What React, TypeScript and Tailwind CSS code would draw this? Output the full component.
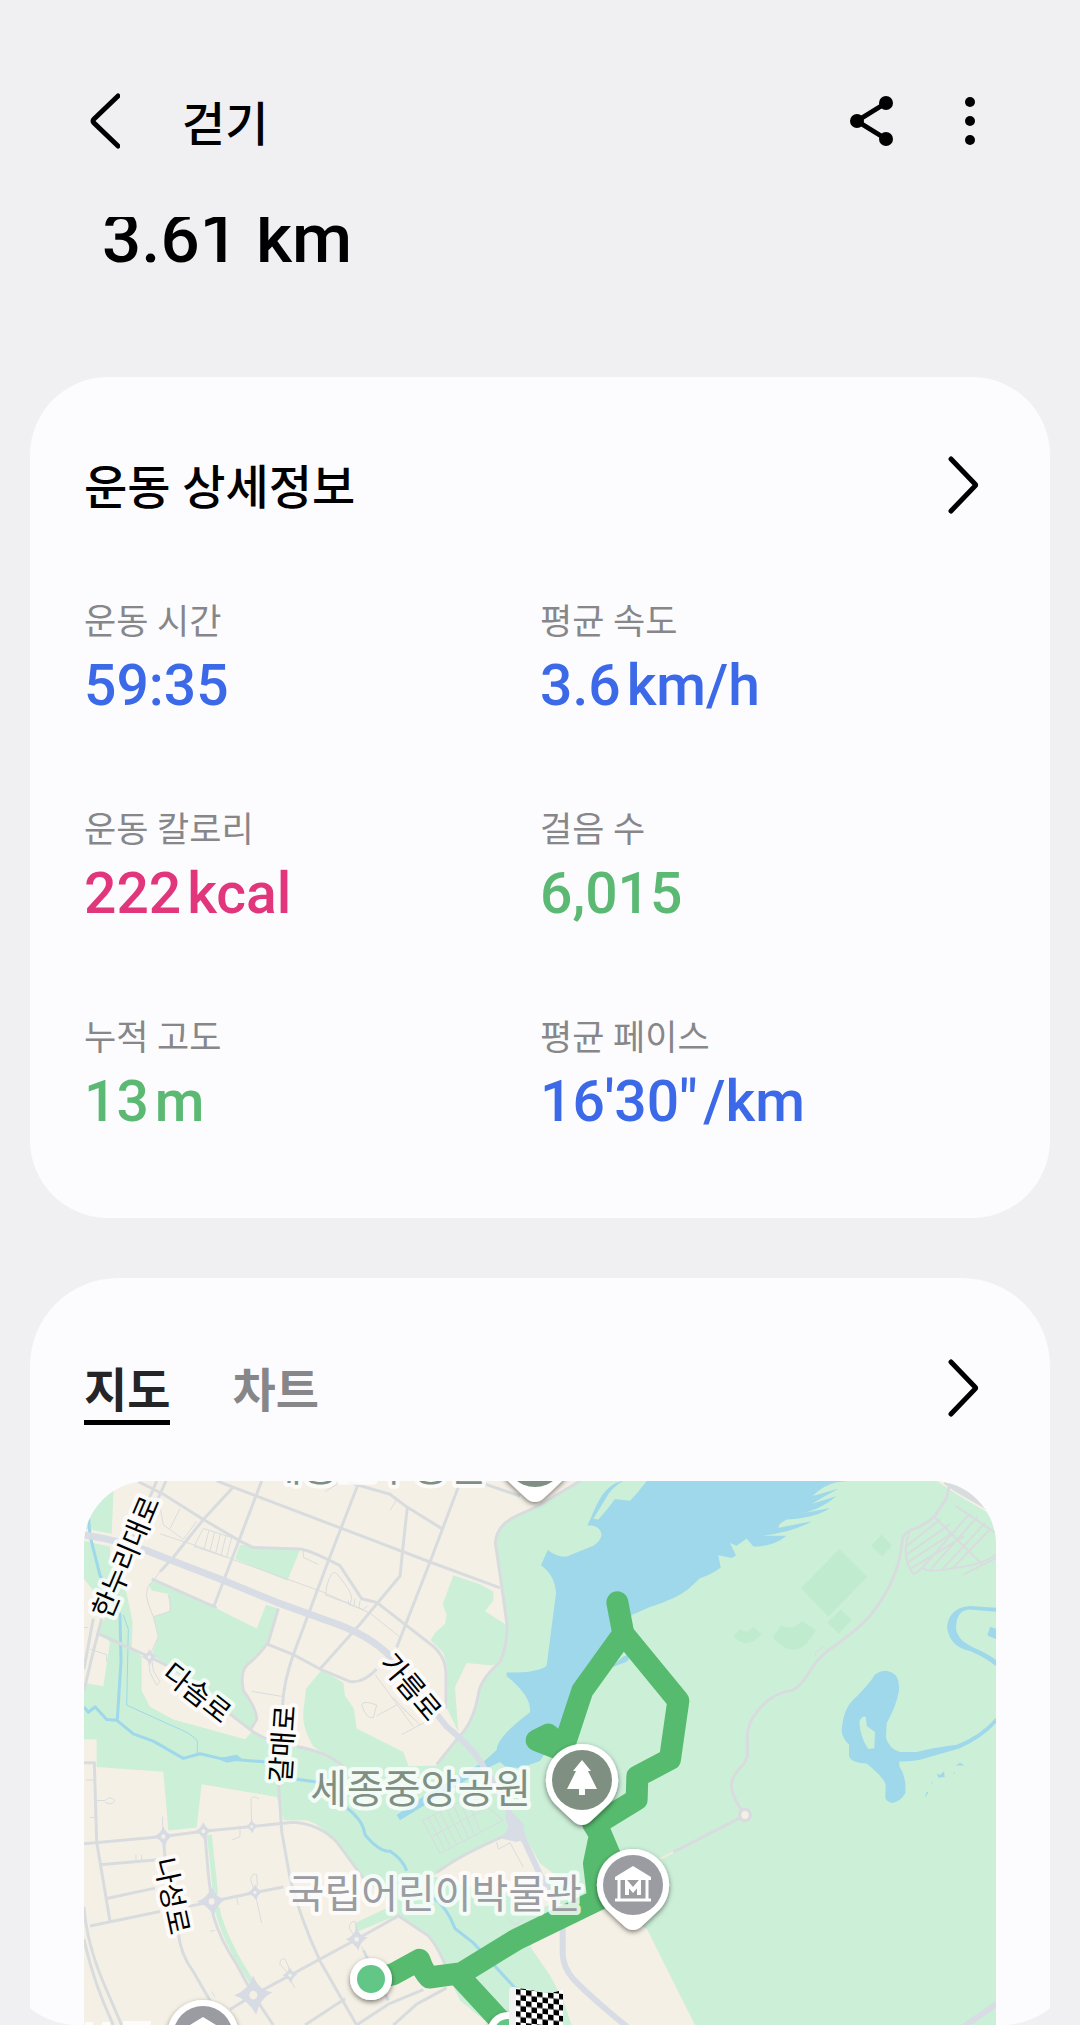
import type { ReactNode } from "react";

const roads = [
  "M235 60L310 95L430 165L540 225L580 243L720 247Q750 250 840 293Q880 350 905 385L950 395L1110 510Q1155 540 1158 590V690",
  "M470 58L590 100L845 190L1110 283L1320 355",
  "M605 58L462 405",
  "M520 75L430 165L340 270L300 310",
  "M893 70L805 280L700 540Q670 620 668 680",
  "M865 62L990 95L1040 130L1145 190",
  "M1195 75L1110 283L1010 520",
  "M1042 130L1028 250L1020 322L905 450L780 580",
  "M275 330L470 410",
  "M110 480L265 545L320 570",
  "M510 705L580 755L620 775",
  "M710 795Q800 810 850 850",
  "M655 412L625 505Q600 540 560 570Q540 590 550 640Q590 690 590 720L570 750",
  "M620 510L700 540L780 580L870 615Q910 620 950 580",
  "M1560 58L1440 125L1370 155Q1310 180 1306 230L1322 330L1340 450Q1345 510 1320 560Q1260 610 1255 650Q1240 730 1195 770L1130 845",
  "M1260 62L1380 100",
  "M72 1065L310 1045L430 1030L575 1017L700 1005Q780 1010 830 1060L910 1160",
  "M655 890L665 1030L690 1160Q720 1270 780 1390L890 1568",
  "M72 840H103L110 1060L150 1280",
  "M310 1045L315 1105M120 1123L310 1108",
  "M140 1217L285 1188M90 1293L300 1253M380 1240L455 1225L585 1200L670 1185",
  "M435 1040L445 1150L455 1225L460 1265Q480 1330 530 1400L580 1485L640 1568",
  "M355 1310Q360 1370 400 1420L450 1500",
  "M510 1525L580 1485L690 1430L890 1330L1015 1265L1105 1320Q1140 1360 1160 1410",
  "M72 1240Q80 1340 130 1450L185 1568M72 1330Q100 1450 160 1568",
  "M735 1568L855 1495M890 1568L985 1510L1090 1470M910 1360L985 1500M1000 1568L1070 1510L1160 1465",
  "M1130 1145Q1200 1095 1340 1040",
  "M290 58L210 235M318 58L230 240M100 440L72 580M125 440L95 550L72 640",
];

const lanes = [
  "M300 310L262 355Q255 375 265 400L280 435L295 490L270 540M280 435L330 420L332 400L325 375",
  "M300 130L310 180L370 220L410 170M360 135L330 190M300 205L400 235L530 280L785 365L930 425L1015 488",
  "M430 190L515 215L500 270L402 240ZM447 195L432 248M464 200L450 254M481 205L467 259M498 210L483 264",
  "M730 250V270L775 290M797 375L800 350Q815 300 830 315L855 345Q875 370 875 385L870 400ZM865 390V400L910 415L922 405M885 385L882 405M900 390L897 412",
  "M990 140L1010 110M795 88L830 68L835 60",
  "M575 642L665 656M945 595L1060 740M905 680Q910 665 950 680L940 715Q920 720 905 680ZM950 710L1010 680M1000 660L1040 700M1025 685L1080 735M1025 762L1100 725M1045 660L1090 710",
  "M265 550L270 590L290 625L300 615L280 585L275 550",
  "M90 525L140 540V560M72 465H85M78 888H105M90 992H108M110 945H135Q150 930 165 945Q155 960 135 950",
  "M575 1015L573 940Q580 930 597 940M540 1025V1045L515 1055M228 1095V1110M245 1095V1110M308 990V1030",
  "M585 1200L572 1165Q575 1145 590 1150L592 1180L585 1200L605 1285M530 1215L535 1235",
  "M690 1430L660 1400Q660 1380 675 1385L685 1405L690 1430L650 1450M685 1435L705 1465M890 1330L868 1300Q868 1280 885 1280L890 1300M905 1350L915 1370",
  "M1088 1000L1240 930L1330 1000L1140 1092ZM1105 992L1155 1083M1122 984L1172 1075M1140 976L1190 1067M1160 968L1208 1059M1180 958L1226 1050M1200 949L1244 1041M1220 940L1262 1032M1115 1045L1270 970",
  "M1310 1060L1315 1080L1350 1062L1390 1130M1340 1270L1365 1290L1390 1275M455 1475L465 1490M450 1308L465 1305M518 1380L530 1375",
];

const trail =
  "M510 195Q485 205 485 235Q475 330 400 420Q370 460 270 525Q230 550 200 600Q170 640 150 640Q90 650 50 700Q22 730 22 770L22 820Q18 840 0 855Q-30 885 -25 910Q-20 940 8 975";

const fieldLines = [
  "M510 195Q480 270 520 315L530 312L548 298Q560 315 640 300Q730 290 768 262",
  "M648 128L768 203M580 155L730 293",
  "M498 240L600 165M500 262L630 178M502 285L650 195M515 300L672 212M548 298L690 148M572 303L712 158M605 305L735 175M635 303L752 190M670 318L768 272",
];

function Road({ d, width = 3, color = "#d9dcdf" }: { d: string; width?: number; color?: string }) {
  return (
    <path
      d={d}
      fill="none"
      stroke={color}
      strokeWidth={width}
      strokeLinejoin="round"
      vectorEffect="non-scaling-stroke"
    />
  );
}

function Junction({ x, y, r }: { x: number; y: number; r: number }) {
  return (
    <g transform={`translate(${x} ${y})`}>
      <path
        d={`M${-r * 1.7} 0Q${-r / 2} ${-r / 3} 0 ${-r * 1.6}Q${r / 2} ${-r / 3} ${r * 1.7} ${-r / 4}Q${r / 2} ${r / 3} ${r / 4} ${r * 1.6}Q${-r / 2} ${r / 3} ${-r * 1.7} 0Z`}
        fill="#d7dbe3"
      />
      <circle r={r * 0.8} fill="#d7dbe3" />
      <circle r={r * 0.35} fill="#f5f0e5" />
    </g>
  );
}

function Pin({ x, y, color, children }: { x: number; y: number; color: string; children?: ReactNode }) {
  return (
    <g transform={`translate(${x} ${y})`}>
      <path
        d="M0-36A36 36 0 0 1 27 24L9 41Q0 49-9 41L-27 24A36 36 0 0 1 0-36Z"
        fill="#fff"
        filter="url(#pin-shadow)"
      />
      <circle r="30" fill={color} />
      {children}
    </g>
  );
}

function MuseumGlyph() {
  return (
    <g>
      <path d="M0-19L18-8V-5H-18V-8Z" fill="#fff" />
      <path d="M-14-5V14M14-5V14M-18 15H18" stroke="#fff" strokeWidth="3" fill="none" />
      <path d="M-6 10V-2L0 5L6-2V10" stroke="#fff" strokeWidth="4" fill="none" />
    </g>
  );
}

function RoadLabel({ x, y, angle, children }: { x: number; y: number; angle: number; children: string }) {
  return (
    <text
      transform={`translate(${x} ${y}) rotate(${angle})`}
      y={10}
      textAnchor="middle"
      fontSize={28}
      fontWeight={400}
      fill="#000"
      stroke="#fff"
      strokeOpacity={0.8}
      strokeWidth={8}
      strokeLinejoin="round"
      paintOrder="stroke"
    >
      {children}
    </text>
  );
}

function PlaceLabel({ x, y, color, children }: { x: number; y: number; color: string; children: string }) {
  return (
    <text
      x={x}
      y={y}
      textAnchor="end"
      fontSize={40}
      fill={color}
      stroke="#fff"
      strokeOpacity={0.8}
      strokeWidth={8}
      strokeLinejoin="round"
      paintOrder="stroke"
    >
      {children}
    </text>
  );
}

function RouteMap() {
  return (
    <svg viewBox="0 0 912 620" role="img" aria-label="운동 경로 지도" className="block h-auto w-full">
      <defs>
        <filter id="pin-shadow" x="-30%" y="-30%" width="160%" height="160%">
          <feDropShadow dx="0" dy="2" stdDeviation="2.5" floodOpacity="0.5" />
        </filter>
        <pattern id="checker" width="11" height="11" patternUnits="userSpaceOnUse" patternTransform="translate(431 508) skewY(6)">
          <rect width="11" height="11" fill="#fff" />
          <path d="M0 0H5.5V11H11V5.5H0Z" fill="#000" />
        </pattern>
      </defs>
      <rect width="912" height="620" fill="#f5f0e5" />
      <g transform="matrix(0.333333 0 0 0.36036 -24 -21)">
        {/* Parks */}
        <g fill="#ccefd8">
          <path d="M162 58L155 205L72 190V58Z" />
          <path d="M72 225L150 240L150 275L200 370L218 450L215 520L245 545V640L270 685L340 720L555 775L575 755L615 778L740 800L860 850H1050L1130 848L1195 775L1290 850L1340 950L1385 1040L1440 1150L1580 1200L1410 1350L1470 1430L1510 1500L1535 1568V1740H1500L1290 1568L1200 1500L1150 1400L1110 1320L1015 1262L885 1312V1285L1000 1235L910 1160L830 1060Q780 1010 740 1000H672L650 935L425 900L410 1020L325 1028L310 865L110 852V775H72V618L130 628L150 505L110 470L150 420L72 330Z" />
          <path d="M265 345L285 332L470 412L590 468L618 402L655 412L625 500Q600 540 560 570Q540 590 550 640Q590 690 590 720L575 748L320 570L275 540L295 490L280 435L330 420L325 372L275 362Z" />
          <path d="M540 235L720 250L682 335L525 275Z" />
          <path d="M785 583L850 618L855 655L882 690L890 745L1030 810L1050 860H860L760 795Q725 740 730 700L738 635Z" />
          <path d="M1180 320L1260 345L1300 365V390L1275 420L1335 455L1342 500Q1330 560 1295 570L1220 563L1185 630L1195 755L1162 690V580L1150 535L1112 500L1125 480L1155 455L1160 430L1148 400Z" />
          <path d="M1560 58L1440 125L1370 155Q1310 180 1306 230L1322 330L1340 450Q1345 510 1320 560Q1260 610 1255 650Q1240 730 1195 770L1290 850L1340 950L1440 1120L1610 1240L1760 1300L1905 1568L2000 1740H2808V58Z" />
        </g>
        <path d="M1120 1155Q1200 1100 1340 1045L1385 1060L1450 1170L1480 1230L1400 1260L1340 1200L1250 1190Z" fill="#f5f0e5" />
        <Road d="M448 1040L467 1205M470 1240Q490 1330 580 1455" width={5} color="#ccefd8" />

        {/* Water */}
        <g transform="translate(1260)" fill="#9fd8ea">
          <path d="M322 182L350 125Q380 65 430 58Q395 75 375 110L340 163L355 165Q380 140 405 108L450 113Q470 95 500 58H1107L1070 62Q1030 70 998 100L1075 80Q1035 100 995 122L1070 100Q1020 140 955 150L1050 133Q1010 160 920 165Q890 180 897 188L995 170Q940 200 848 210L920 210Q880 240 820 240L800 218L770 238L750 230L768 265L755 272L715 264L722 298Q700 315 660 328L625 358Q590 385 510 408L455 430L430 480L300 640L240 750L180 835Q150 845 120 855Q90 852 75 850L60 838L10 860L-170 960L-240 1000L-250 985L-165 930L10 838L50 805Q50 770 150 700Q155 655 80 600V590Q180 590 200 570L228 370Q225 320 183 292L203 250Q230 270 260 268L340 238Q375 215 360 195Q350 180 322 182Z" />
          <path d="M390 577L430 545L460 535L440 560L410 570Z" />
        </g>
        <g transform="translate(2040)" fill="#9fd8ea">
          <path
            fillRule="evenodd"
            d="M405 595Q430 578 455 590Q480 600 477 640Q470 680 440 730L438 770Q445 800 480 810H530Q570 800 650 790Q720 765 768 715V730Q730 770 660 800L540 832Q500 838 478 836V850Q500 880 496 925Q480 950 455 952Q435 945 436 935L437 900Q430 880 380 842Q330 840 327 820V790Q305 770 305 750Q310 690 340 665Q385 625 405 595ZM358 725Q370 705 378 715L380 738L405 755L403 800L385 802Q360 770 358 725Z"
          />
          <path d="M768 410L690 405Q625 410 621 465Q630 520 690 530Q740 550 768 572V555Q740 535 700 520Q650 500 648 465Q650 415 690 415L768 421Z" />
          <path d="M750 463L768 468V497L742 487ZM590 870L600 874L612 864L614 880L596 882ZM648 848L660 840L674 848ZM555 937L560 920L565 922ZM572 898L578 892V896ZM640 872L644 864V870Z" />
        </g>
        <Road d="M85 150L90 210L120 320L180 430L183 560L172 720" width={3} color="#9fd8ea" />
        <Road d="M190 430L205 470L200 680L330 735Q400 760 412 780V815" width={1} color="#9fd8ea" />
        <Road d="M72 685L85 700L105 685L140 720L170 722L220 760L280 780L370 828L420 815L480 828L620 838M705 885L780 895M860 965Q910 1000 915 1040Q960 1090 990 1085Q1030 1110 1040 1140M1120 1215Q1160 1240 1185 1300L1240 1340L1380 1480" width={3} color="#9fd8ea" />
        <path d="M470 828L530 818L550 832L500 840Z" fill="#9fd8ea" />

        {/* Lawns */}
        <g transform="translate(2040)" fill="#c0ebce">
          <path d="M298 248L382 325L265 435L183 355ZM425 207L456 238L427 267L393 238ZM303 415L335 443L296 483L262 450Z" />
          <path d="M125 458Q155 478 185 447L228 472Q170 570 98 492ZM-20 490L0 470Q20 485 40 463L65 483Q20 530-20 490Z" />
        </g>

        {/* Streets */}
        {lanes.map((d) => (
          <Road key={d} d={d} width={1} />
        ))}
        {roads.map((d) => (
          <Road key={d} d={d} />
        ))}
        <Road
          d="M72 208Q200 225 310 270L480 330L650 395L800 445Q930 485 990 545"
          width={7}
          color="#d8dce4"
        />
        <Road
          d="M990 545L1160 740Q1240 800 1270 850L1340 960Q1360 1010 1385 1040L1440 1150L1490 1230Q1508 1260 1508 1300V1370Q1510 1410 1540 1440Q1590 1490 1750 1610"
          width={6}
          color="#d8dce4"
        />
        <Junction x={310} y={1045} r={18} />
        <Junction x={430} y={1030} r={16} />
        <Junction x={455} y={1225} r={26} />
        <Junction x={585} y={1200} r={14} />
        <Junction x={580} y={1485} r={34} />
        <Junction x={890} y={1330} r={20} />
        <Junction x={690} y={1430} r={14} />
        <Junction x={575} y={1017} r={12} />
        <Junction x={268} y={547} r={14} />
        <path d="M1335 985L1360 980L1390 1010L1395 1050L1370 1060L1325 1050L1345 1020Z" fill="#d8dce4" />

        {/* East side paths */}
        <g transform="translate(2040)">
          <path d="M590 58H768V160L650 95L625 80Z" fill="#f5f0e5" />
          <Road d="M615 60L655 85L740 130M640 62L768 150" width={5} />
          {fieldLines.map((d) => (
            <Road key={d} d={d} width={2} />
          ))}
          <Road d="M510 195Q560 180 585 155L620 105L628 70" width={3} />
          <Road d={trail} width={3} />
          <Road d="M228 545L226 535L250 518L262 528L240 552" width={1} />
          <Road d="M0 993L-200 1088" width={3} />
          <Road d="M-200 1088L-240 1107" width={2} color="#eeeedd" />
          <ellipse cx="15" cy="985" rx="16" ry="16" fill="#f5f0e5" stroke="#d9dcdf" strokeWidth="10" />
          <Road d="M660 1580L768 1510" width={6} color="#d8dce4" />
        </g>

        {/* Recorded route */}
        <g fill="none" stroke="#57bb6f" strokeWidth={22} strokeLinecap="round" strokeLinejoin="round">
          <path
            vectorEffect="non-scaling-stroke"
            d="M932 1440L1000 1427L1078 1387Q1090 1420 1108 1436L1205 1424L1370 1330L1615 1220L1602 1120L1620 1040L1600 1010L1590 900L1505 805L1430 778L1465 762L1510 800L1567 640L1690 482L1672 395"
          />
          <path
            vectorEffect="non-scaling-stroke"
            d="M1690 482L1855 668L1830 830L1732 878L1730 942L1610 1010L1660 1120L1640 1200"
          />
          <path vectorEffect="non-scaling-stroke" d="M1195 1430L1345 1580" />
        </g>
      </g>

      <g fontFamily="'Noto Sans CJK KR', sans-serif">
        <RoadLabel x={42} y={76} angle={-67}>한누리대로</RoadLabel>
        <RoadLabel x={113} y={212} angle={38}>다솜로</RoadLabel>
        <RoadLabel x={327} y={206} angle={50}>가름로</RoadLabel>
        <RoadLabel x={199} y={263} angle={-86}>갈매로</RoadLabel>
        <RoadLabel x={88} y={415} angle={78}>나성로</RoadLabel>
        <PlaceLabel x={402} y={0} color="#7f9082">세종호수공원</PlaceLabel>
        <PlaceLabel x={447} y={322} color="#7f9082">세종중앙공원</PlaceLabel>
        <PlaceLabel x={498} y={427} color="#9a9ca1">국립어린이박물관</PlaceLabel>
      </g>
      <path d="M1 541H9V560H1ZM18 541H26V560H18ZM39 540H67V560H39Z" fill="#fff" opacity="0.8" />

      <Pin x={451} y={-24} color="#7f9082" />
      <Pin x={498} y={299} color="#7f9082">
        <path d="M0-20L9-9H6L15 9H3V15H-3V9H-15L-6-9H-9Z" fill="#fff" />
      </Pin>
      <Pin x={549} y={404} color="#9a9ca1">
        <MuseumGlyph />
      </Pin>
      <Pin x={119} y={555} color="#9a9ca1">
        <MuseumGlyph />
      </Pin>

      <circle cx="287" cy="498" r="21" fill="#fff" filter="url(#pin-shadow)" />
      <circle cx="287" cy="498" r="14" fill="#62c686" />
      <circle cx="424" cy="552" r="21" fill="#fff" filter="url(#pin-shadow)" />
      <circle cx="424" cy="552" r="14" fill="#62c686" />
      <path d="M425 510Q425 506 428 506H432V600H425Z" fill="#f1f1f1" />
      <path d="M432 507Q446 508 455 511Q467 513 479 509V550Q465 554 455 551L432 548Z" fill="url(#checker)" />
    </svg>
  );
}

function Chevron({ left = false }: { left?: boolean }) {
  return (
    <svg viewBox="0 0 32 64" className="h-16 w-8" fill="none" stroke="#000" strokeWidth="5" strokeLinecap="round" strokeLinejoin="round">
      <path d={left ? "M30 7L6 30Q4 32 6 34L30 57" : "M4 6L28 31Q29 32 28 33L4 58"} />
    </svg>
  );
}

type Stat = { label: string; value: string; unit?: string; color: string };

const stats: Stat[] = [
  { label: "운동 시간", value: "59:35", color: "text-[#3c69e7]" },
  { label: "평균 속도", value: "3.6", unit: "km/h", color: "text-[#3c69e7]" },
  { label: "운동 칼로리", value: "222", unit: "kcal", color: "text-[#e1367c]" },
  { label: "걸음 수", value: "6,015", color: "text-[#5bb974]" },
  { label: "누적 고도", value: "13", unit: "m", color: "text-[#5bb974]" },
  { label: "평균 페이스", value: "16'30\"", unit: "/km", color: "text-[#3c69e7]" },
];

export default function App() {
  return (
    <div className="flex h-screen flex-col bg-[#f0f0f2] font-[Roboto,'Noto_Sans_CJK_KR',sans-serif] text-black">
      <header className="flex shrink-0 items-center pt-[89px] pr-[100px] pb-16 pl-[88px]">
        <button type="button" aria-label="뒤로">
          <Chevron left />
        </button>
        <h1 className="ml-[62px] flex-1 pt-2 text-[47px] leading-[56px] font-medium">걷기</h1>
        <button type="button" aria-label="공유" className="mr-16">
          <svg viewBox="0 0 48 52" className="h-[52px] w-12">
            <path d="M38 8L9 26L38 44" fill="none" stroke="#000" strokeWidth="5" />
            <circle cx="38" cy="8" r="7" />
            <circle cx="9" cy="26" r="7" />
            <circle cx="38" cy="44" r="7" />
          </svg>
        </button>
        <button type="button" aria-label="더보기">
          <svg viewBox="0 0 20 52" className="h-[52px] w-5">
            <circle cx="10" cy="7" r="5" />
            <circle cx="10" cy="26" r="5" />
            <circle cx="10" cy="45" r="5" />
          </svg>
        </button>
      </header>

      <main className="min-h-0 flex-1 overflow-y-auto rounded-b-[78px] px-[30px] [scrollbar-width:none]">
        <p className="-mt-[18px] pb-[98px] pl-[72px] text-[69px] leading-[80px] font-medium">3.61 km</p>

        <section className="rounded-[78px] bg-[#fcfcfe] px-[54px] pt-[76px] pb-[84px]">
          <div className="flex items-center justify-between">
            <h2 className="pt-[6px] text-[47px] leading-[58px] font-medium">운동 상세정보</h2>
            <button type="button" aria-label="운동 상세정보 보기" className="mr-[17px]">
              <Chevron />
            </button>
          </div>
          <dl className="mt-[82px] grid grid-cols-2 gap-y-[89px]">
            {stats.map((s) => (
              <div key={s.label}>
                <dt className="text-[35px] leading-[48px] text-[#87878a]">{s.label}</dt>
                <dd className={`mt-[7px] text-[57px] leading-[64px] font-medium ${s.color}`}>
                  {s.value}
                  {s.unit && <span className="ml-[6px]">{s.unit}</span>}
                </dd>
              </div>
            ))}
          </dl>
        </section>

        <section className="mt-[60px] rounded-[88px] bg-[#fcfcfe] px-[54px] pt-[78px] pb-[84px]">
          <div className="flex items-start justify-between">
            <div role="tablist" className="flex gap-[62px] text-[47px] leading-[58px] font-bold">
              <button type="button" role="tab" aria-selected="true" className="border-b-[5px] border-black pt-[6px] text-[#252528]">
                지도
              </button>
              <button type="button" role="tab" aria-selected="false" className="border-b-[5px] border-transparent pt-[6px] text-[#87878a]">
                차트
              </button>
            </div>
            <button type="button" aria-label="지도 크게 보기" className="mr-[17px]">
              <Chevron />
            </button>
          </div>
          <div className="mt-14 overflow-hidden rounded-[64px]">
            <RouteMap />
          </div>
        </section>
      </main>
    </div>
  );
}
